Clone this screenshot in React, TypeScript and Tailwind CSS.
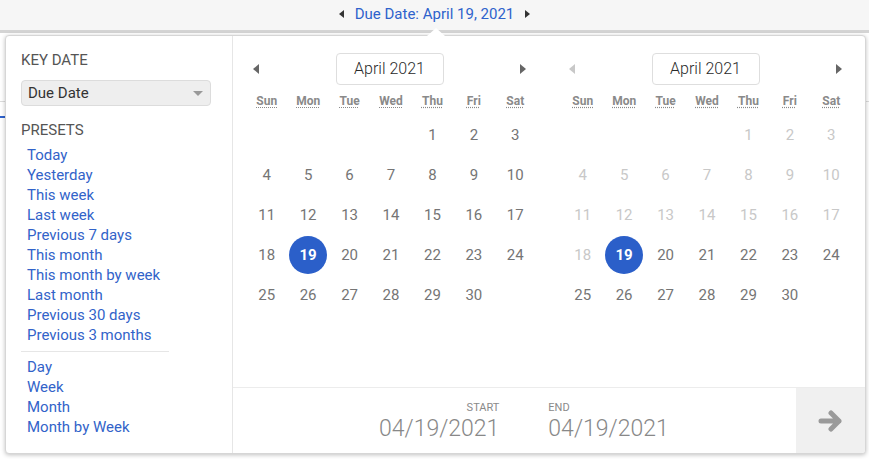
import React from "react";

const font = { fontFamily: "Roboto, 'Noto Sans', sans-serif" };

const presets = [
  "Today",
  "Yesterday",
  "This week",
  "Last week",
  "Previous 7 days",
  "This month",
  "This month by week",
  "Last month",
  "Previous 30 days",
  "Previous 3 months",
];
const units = ["Day", "Week", "Month", "Month by Week"];
const days = ["Sun", "Mon", "Tue", "Wed", "Thu", "Fri", "Sat"];

function TriLeft({ light }: { light?: boolean }) {
  return (
    <svg width="6" height="10" viewBox="0 0 6 10">
      <path d="M6 0 L0 5 L6 10 Z" fill={light ? "#c8c8c8" : "#666"} />
    </svg>
  );
}
function TriRight({ light }: { light?: boolean }) {
  return (
    <svg width="6" height="10" viewBox="0 0 6 10">
      <path d="M0 0 L6 5 L0 10 Z" fill={light ? "#c8c8c8" : "#666"} />
    </svg>
  );
}

function Calendar({ second }: { second?: boolean }) {
  const cells: (number | null)[] = [null, null, null, null];
  for (let i = 1; i <= 30; i++) cells.push(i);
  return (
    <div className="w-[316px] flex flex-col">
      <div className="h-[38px] mt-[17px] flex items-start justify-between pl-[20px] pr-[23px]">
        <div className="h-[32px] flex items-center">
          <TriLeft light={second} />
        </div>
        <div className="w-[108px] h-[32px] border border-[#dedede] rounded-[4px] flex items-center justify-center text-[16px] font-light text-[#2a2a2a]">
          April 2021
        </div>
        <div className="h-[32px] flex items-center">
          <TriRight />
        </div>
      </div>
      <div className="w-[290px] mx-auto grid grid-cols-7">
        {days.map((d) => (
          <div key={d} className="h-[20px] flex items-center justify-center">
            <abbr
              className="text-[12px] font-bold text-[#8a8a8a]"
              style={{ textDecoration: "underline dotted", textUnderlineOffset: "2px" }}
            >
              {d}
            </abbr>
          </div>
        ))}
      </div>
      <div className="w-[290px] mx-auto grid grid-cols-7 mt-[4px]">
        {cells.map((c, i) => {
          if (c === null) return <div key={i} className="h-[40px]" />;
          const sel = c === 19;
          const faded = second && c < 19;
          return (
            <div key={i} className="h-[40px] flex items-center justify-center">
              {sel ? (
                <div className="w-[38px] h-[38px] rounded-full bg-[#2b5fc9] text-white font-bold text-[15px] flex items-center justify-center">
                  19
                </div>
              ) : (
                <span className={"text-[15px] " + (faded ? "text-[#c8c8c8]" : "text-[#757575]")}>{c}</span>
              )}
            </div>
          );
        })}
      </div>
    </div>
  );
}

export default function App() {
  return (
    <div className="relative w-[869px] h-[459px] bg-white overflow-hidden" style={font}>
      {/* top bar */}
      <div className="h-[33px] bg-[#f6f6f6] border-b-[3px] border-[#d4d4d4] flex items-start justify-center pt-[4px]">
        <div className="flex items-center h-[20px] gap-[11px]">
          <svg width="5" height="8" viewBox="0 0 5 8">
            <path d="M5 0 L0 4 L5 8 Z" fill="#333" />
          </svg>
          <span className="text-[15px] text-[#2e62cc]">Due Date: April 19, 2021</span>
          <svg width="5" height="8" viewBox="0 0 5 8">
            <path d="M0 0 L5 4 L0 8 Z" fill="#333" />
          </svg>
        </div>
      </div>
      {/* page content behind */}
      <div className="mt-[68px] h-px bg-[#dcdcdc]" />
      <div className="mt-[14px] h-[2px] bg-[#2e62cc] w-[12px]" />

      {/* popover arrow */}
      <div className="absolute left-[427px] top-[28px] w-0 h-0 border-l-[9px] border-r-[9px] border-b-[8px] border-l-transparent border-r-transparent border-b-white z-20" />

      {/* popover */}
      <div className="absolute left-[5px] top-[35px] w-[861px] h-[419px] bg-white border border-[#d6d6d6] rounded-[4px] shadow-[0_1px_4px_rgba(0,0,0,0.25)] flex z-10 overflow-hidden">
        {/* left panel */}
        <div className="w-[228px] border-r border-[#e6e6e6] pl-[15px] pt-[14px] flex flex-col">
          <div className="text-[15px] leading-[20px] text-[#555]">KEY DATE</div>
          <div className="mt-[10px] w-[190px] h-[26px] bg-[#eeeeee] border border-[#dcdcdc] rounded-[4px] flex items-center justify-between pl-[6px] pr-[7px]">
            <span className="text-[15px] text-[#333]">Due Date</span>
            <svg width="10" height="5" viewBox="0 0 10 5">
              <path d="M0 0 L10 0 L5 5 Z" fill="#999" />
            </svg>
          </div>
          <div className="mt-[14px] text-[15px] leading-[20px] text-[#555]">PRESETS</div>
          <div className="mt-[5px] pl-[6px] flex flex-col">
            {presets.map((p) => (
              <div key={p} className="text-[15px] leading-[20px] text-[#3263c9]">
                {p}
              </div>
            ))}
          </div>
          <div className="mt-[6px] w-[148px] h-px bg-[#e6e6e6]" />
          <div className="mt-[5px] pl-[6px] flex flex-col">
            {units.map((p) => (
              <div key={p} className="text-[15px] leading-[20px] text-[#3263c9]">
                {p}
              </div>
            ))}
          </div>
        </div>
        {/* right panel */}
        <div className="flex-1 flex flex-col">
          <div className="flex-1 flex">
            <Calendar />
            <Calendar second />
          </div>
          <div className="h-[66px] border-t border-[#ececec] flex">
            <div className="flex-1 flex items-start pt-[13px] pl-[146px] gap-[49px]">
              <div className="flex flex-col items-end">
                <span className="text-[11px] leading-[14px] text-[#8a8a8a]">START</span>
                <span className="text-[23px] leading-[27px] font-light text-[#888]">04/19/2021</span>
              </div>
              <div className="flex flex-col items-start">
                <span className="text-[11px] leading-[14px] text-[#8a8a8a]">END</span>
                <span className="text-[23px] leading-[27px] font-light text-[#888]">04/19/2021</span>
              </div>
            </div>
            <div className="w-[69px] bg-[#f0f0f0] flex items-center justify-center">
              <svg width="26" height="22" viewBox="0 0 26 22">
                <path
                  d="M3 11 H21 M13 3 L21 11 L13 19"
                  stroke="#9a9a9a"
                  strokeWidth="5"
                  strokeLinecap="round"
                  strokeLinejoin="round"
                  fill="none"
                />
              </svg>
            </div>
          </div>
        </div>
      </div>
    </div>
  );
}
